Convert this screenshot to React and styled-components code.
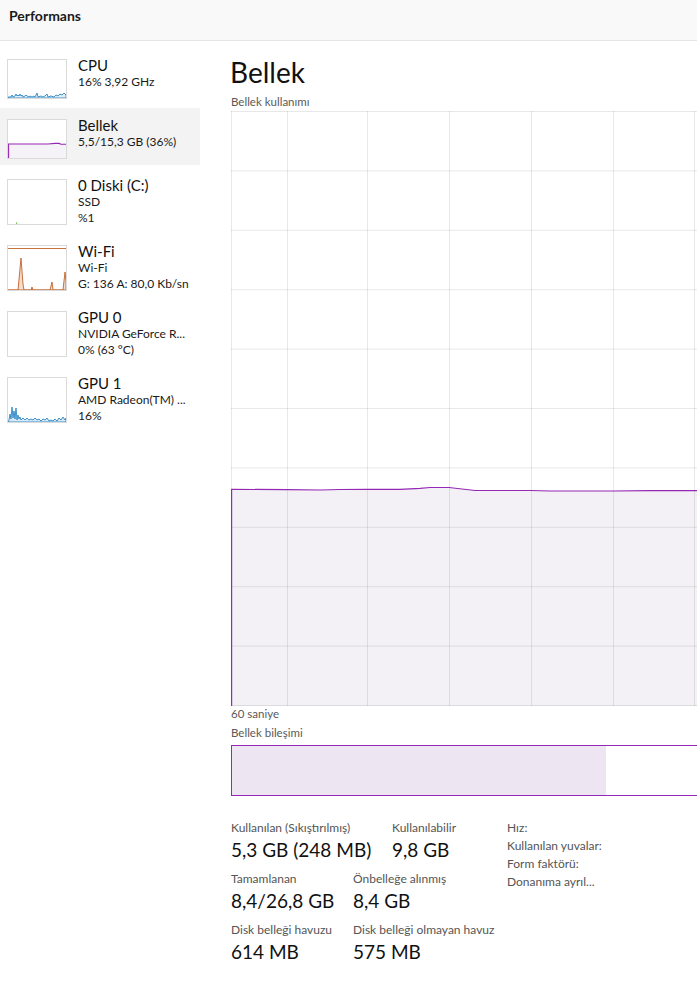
import React from 'react';
import styled, { createGlobalStyle } from 'styled-components';

const FONT = `Lato, "Noto Sans", "Liberation Sans", sans-serif`;
const PURPLE = '#9528b4';

const Global = createGlobalStyle`
  html, body { margin: 0; padding: 0; background: #fff; overflow: hidden; }
  body { font-family: ${FONT}; color: #1a1a1a; }
  * { box-sizing: border-box; }
`;

const Page = styled.div`
  width: 697px;
  height: 981px;
  display: flex;
  flex-direction: column;
  overflow: hidden;
`;

const Header = styled.header`
  height: 41px;
  flex-shrink: 0;
  background: #f9f9f9;
  border-bottom: 1px solid #e5e5e5;
  padding: 8px 0 0 9px;
  font-size: 14px;
  line-height: 16.8px;
  font-weight: 700;
  color: #1b1b1b;
`;

const Body = styled.div`
  flex: 1;
  display: flex;
  min-height: 0;
`;

const Sidebar = styled.nav`
  width: 200px;
  flex-shrink: 0;
  padding-top: 7px;
  display: flex;
  flex-direction: column;
  gap: 3px;
`;

const Item = styled.div`
  height: ${p => p.$h}px;
  display: flex;
  align-items: flex-start;
  gap: 11px;
  padding: 8px 0 0 7px;
  background: ${p => (p.$active ? '#f3f3f3' : 'transparent')};
`;

const Thumb = styled.div`
  margin-top: 3px;
  width: 60px;
  height: ${p => p.$h}px;
  border: 1px solid #dadada;
  background: #fff;
  flex-shrink: 0;
  svg { display: block; }
`;

const ItemText = styled.div`
  display: flex;
  flex-direction: column;
  min-width: 0;
`;

const ItemTitle = styled.div`
  font-size: 15px;
  line-height: 18px;
  color: #111;
`;

const ItemSub = styled.div`
  font-size: 12px;
  line-height: 16px;
  color: #1a1a1a;
  white-space: nowrap;
`;

const Main = styled.main`
  flex: 1;
  min-width: 0;
  padding: 14px 0 0 30px;
  overflow: hidden;
`;

const Title = styled.h1`
  margin: 0;
  font-size: 28px;
  line-height: 34px;
  font-weight: 400;
  color: #111;
`;

const SmallLabel = styled.div`
  font-size: 11.5px;
  line-height: 16px;
  color: #5a5a5a;
  margin-top: ${p => p.$mt || 0}px;
  margin-left: 1px;
`;

const Chart = styled.div`
  margin: 1px 0 0 1px;
  width: 500px;
  height: 595px;
  svg { display: block; }
`;

const CompBar = styled.div`
  margin: 4px 0 0 1px;
  width: 500px;
  height: 51px;
  border: 1px solid ${PURPLE};
  display: flex;
`;

const CompFill = styled.div`
  background: #ede5f2;
  height: 100%;
`;

const Stats = styled.div`
  margin: 24px 0 0 1px;
  display: flex;
`;

const StatCols = styled.div`
  width: 276px;
  display: flex;
  flex-direction: column;
  gap: 8px;
`;

const StatRow = styled.div`
  display: grid;
  grid-template-columns: ${p => p.$first}px auto;
`;

const Stat = styled.div`
  display: flex;
  flex-direction: column;
`;

const StatLabel = styled.div`
  font-size: 12px;
  line-height: 16px;
  color: #555;
  white-space: nowrap;
`;

const StatValue = styled.div`
  margin-top: 1px;
  font-size: 19px;
  line-height: 26px;
  color: #111;
  white-space: nowrap;
`;

const Props = styled.div`
  display: flex;
  flex-direction: column;
  margin-top: -1px;
`;

const PropLabel = styled.div`
  font-size: 12px;
  line-height: 18px;
  color: #555;
  white-space: nowrap;
`;

/* ---------- thumbnails ---------- */

const CpuGraph = () => (
  <svg width="58" height="38" viewBox="0 0 58 38">
    <path
      d="M0,37 L3,37 L4,35 L5,37 L7,36 L8,34 L9,36 L10,35 L11,36 L12,34 L13,36 L14,35 L15,37 L17,36 L18,35 L19,36 L21,37 L22,36 L24,37 L26,36 L27,37 L29,33 L30,37 L33,36 L35,37 L37,36 L39,34 L40,37 L43,36 L46,37 L48,35 L50,36 L52,34 L54,35 L56,33 L58,35 L58,38 L0,38 Z"
      fill="#e3eff8"
      stroke="#2a86c4"
      strokeWidth="0.9"
    />
  </svg>
);

const MemGraph = () => (
  <svg width="58" height="38" viewBox="0 0 58 38">
    <path d="M0.5,38 L0.5,24 L40,24 L47,23.4 L51,23.4 L53,24.3 L58,24.3 L58,38 Z" fill="#f6f3f8" />
    <path d="M0.6,38 L0.6,24 L40,24 L47,23.4 L51,23.4 L53,24.3 L58,24.3" fill="none" stroke={PURPLE} strokeWidth="1.1" />
  </svg>
);

const DiskGraph = () => (
  <svg width="58" height="44" viewBox="0 0 58 44">
    <rect x="8" y="42.5" width="1.2" height="1.2" fill="#4caf2a" />
  </svg>
);

const WifiGraph = () => (
  <svg width="58" height="44" viewBox="0 0 58 44">
    <line x1="0" y1="2.5" x2="58" y2="2.5" stroke="#c7733c" strokeWidth="1" />
    <path
      d="M0,44 L10,44 L13,12 L15,38 L16,44 L23,44 L24,41 L25,44 L42,44 L44,36 L45,44 L55,44 L57,26 L58,36 L58,44 Z"
      fill="#f3dccb"
      stroke="#c0622a"
      strokeWidth="0.9"
    />
  </svg>
);

const GpuGraph = () => (
  <svg width="58" height="44" viewBox="0 0 58 44" />
);

const Gpu1Graph = () => (
  <svg width="58" height="44" viewBox="0 0 58 44">
    <path
      d="M0,44 L1,42 L2,36 L3,41 L4,29 L5,40 L6,33 L7,41 L8,30 L9,42 L10,37 L11,41 L12,39 L13,42 L15,40 L17,42 L19,40 L21,42 L23,41 L25,42 L27,40 L29,42 L31,41 L33,43 L35,41 L37,42 L39,40 L41,43 L43,42 L45,43 L47,41 L49,43 L51,40 L53,42 L55,39 L57,42 L58,40 L58,44 Z"
      fill="#d8e9f5"
      stroke="#2a86c4"
      strokeWidth="0.9"
    />
  </svg>
);

const items = [
  { title: 'CPU', lines: ['16%  3,92 GHz'], graph: <CpuGraph />, th: 40, h: 57 },
  { title: 'Bellek', lines: ['5,5/15,3 GB (36%)'], graph: <MemGraph />, th: 40, h: 57, active: true },
  { title: '0 Diski (C:)', lines: ['SSD', '%1'], graph: <DiskGraph />, th: 46, h: 63 },
  { title: 'Wi-Fi', lines: ['Wi-Fi', 'G: 136  A: 80,0 Kb/sn'], graph: <WifiGraph />, th: 46, h: 63 },
  { title: 'GPU 0', lines: ['NVIDIA GeForce R...', '0%  (63 °C)'], graph: <GpuGraph />, th: 46, h: 63 },
  { title: 'GPU 1', lines: ['AMD Radeon(TM) ...', '16%'], graph: <Gpu1Graph />, th: 46, h: 63 },
];

/* ---------- main chart ---------- */

const CH_W = 500;
const CH_H = 595;
const vLines = [0.5, 56.5, 136.5, 218.5, 300.5, 382.5, 463.5];
const hLines = Array.from({ length: 11 }, (_, i) => 0.5 + i * 59.4);
const memPts = [
  [0, 378.3], [56, 378.7], [89, 379], [109, 378.5], [136, 378.3], [169, 378.3],
  [189, 377.4], [199, 376.5], [218, 376.5], [244, 379.5], [300, 379.5], [319, 380],
  [382, 380], [419, 379.7], [500, 379.7],
];
const linePath = memPts.map((p, i) => `${i ? 'L' : 'M'}${p[0]},${p[1]}`).join(' ');
const fillPath = `${linePath} L${CH_W},${CH_H} L0,${CH_H} Z`;

const MemoryChart = () => (
  <svg width={CH_W} height={CH_H} viewBox={`0 0 ${CH_W} ${CH_H}`}>
    <rect x="0" y="0" width={CH_W} height={CH_H} fill="#fff" />
    <path d={fillPath} fill="#f3f1f5" />
    {hLines.map(y => (
      <line key={'h' + y} x1="0" x2={CH_W} y1={y} y2={y} stroke="rgba(0,0,0,0.09)" strokeWidth="1" />
    ))}
    {vLines.map(x => (
      <line key={'v' + x} x1={x} x2={x} y1="0" y2={CH_H} stroke="rgba(0,0,0,0.09)" strokeWidth="1" />
    ))}
    <path d={linePath} fill="none" stroke={PURPLE} strokeWidth="1.2" />
    <line x1="0.6" x2="0.6" y1="378.3" y2={CH_H} stroke={PURPLE} strokeWidth="1.2" />
  </svg>
);

export default function App() {
  return (
    <>
      <Global />
      <Page>
        <Header>Performans</Header>
        <Body>
          <Sidebar>
            {items.map(it => (
              <Item key={it.title} $h={it.h} $active={it.active}>
                <Thumb $h={it.th}>{it.graph}</Thumb>
                <ItemText>
                  <ItemTitle>{it.title}</ItemTitle>
                  {it.lines.map(l => (
                    <ItemSub key={l}>{l}</ItemSub>
                  ))}
                </ItemText>
              </Item>
            ))}
          </Sidebar>
          <Main>
            <Title>Bellek</Title>
            <SmallLabel $mt={5}>Bellek kullanımı</SmallLabel>
            <Chart>
              <MemoryChart />
            </Chart>
            <SmallLabel>60 saniye</SmallLabel>
            <SmallLabel $mt={3}>Bellek bileşimi</SmallLabel>
            <CompBar>
              <CompFill style={{ width: '374px' }} />
            </CompBar>
            <Stats>
              <StatCols>
                <StatRow $first={161}>
                  <Stat>
                    <StatLabel>Kullanılan (Sıkıştırılmış)</StatLabel>
                    <StatValue>5,3 GB (248 MB)</StatValue>
                  </Stat>
                  <Stat>
                    <StatLabel>Kullanılabilir</StatLabel>
                    <StatValue>9,8 GB</StatValue>
                  </Stat>
                </StatRow>
                <StatRow $first={122}>
                  <Stat>
                    <StatLabel>Tamamlanan</StatLabel>
                    <StatValue>8,4/26,8 GB</StatValue>
                  </Stat>
                  <Stat>
                    <StatLabel>Önbelleğe alınmış</StatLabel>
                    <StatValue>8,4 GB</StatValue>
                  </Stat>
                </StatRow>
                <StatRow $first={122}>
                  <Stat>
                    <StatLabel>Disk belleği havuzu</StatLabel>
                    <StatValue>614 MB</StatValue>
                  </Stat>
                  <Stat>
                    <StatLabel>Disk belleği olmayan havuz</StatLabel>
                    <StatValue>575 MB</StatValue>
                  </Stat>
                </StatRow>
              </StatCols>
              <Props>
                <PropLabel>Hız:</PropLabel>
                <PropLabel>Kullanılan yuvalar:</PropLabel>
                <PropLabel>Form faktörü:</PropLabel>
                <PropLabel>Donanıma ayrıl...</PropLabel>
              </Props>
            </Stats>
          </Main>
        </Body>
      </Page>
    </>
  );
}
